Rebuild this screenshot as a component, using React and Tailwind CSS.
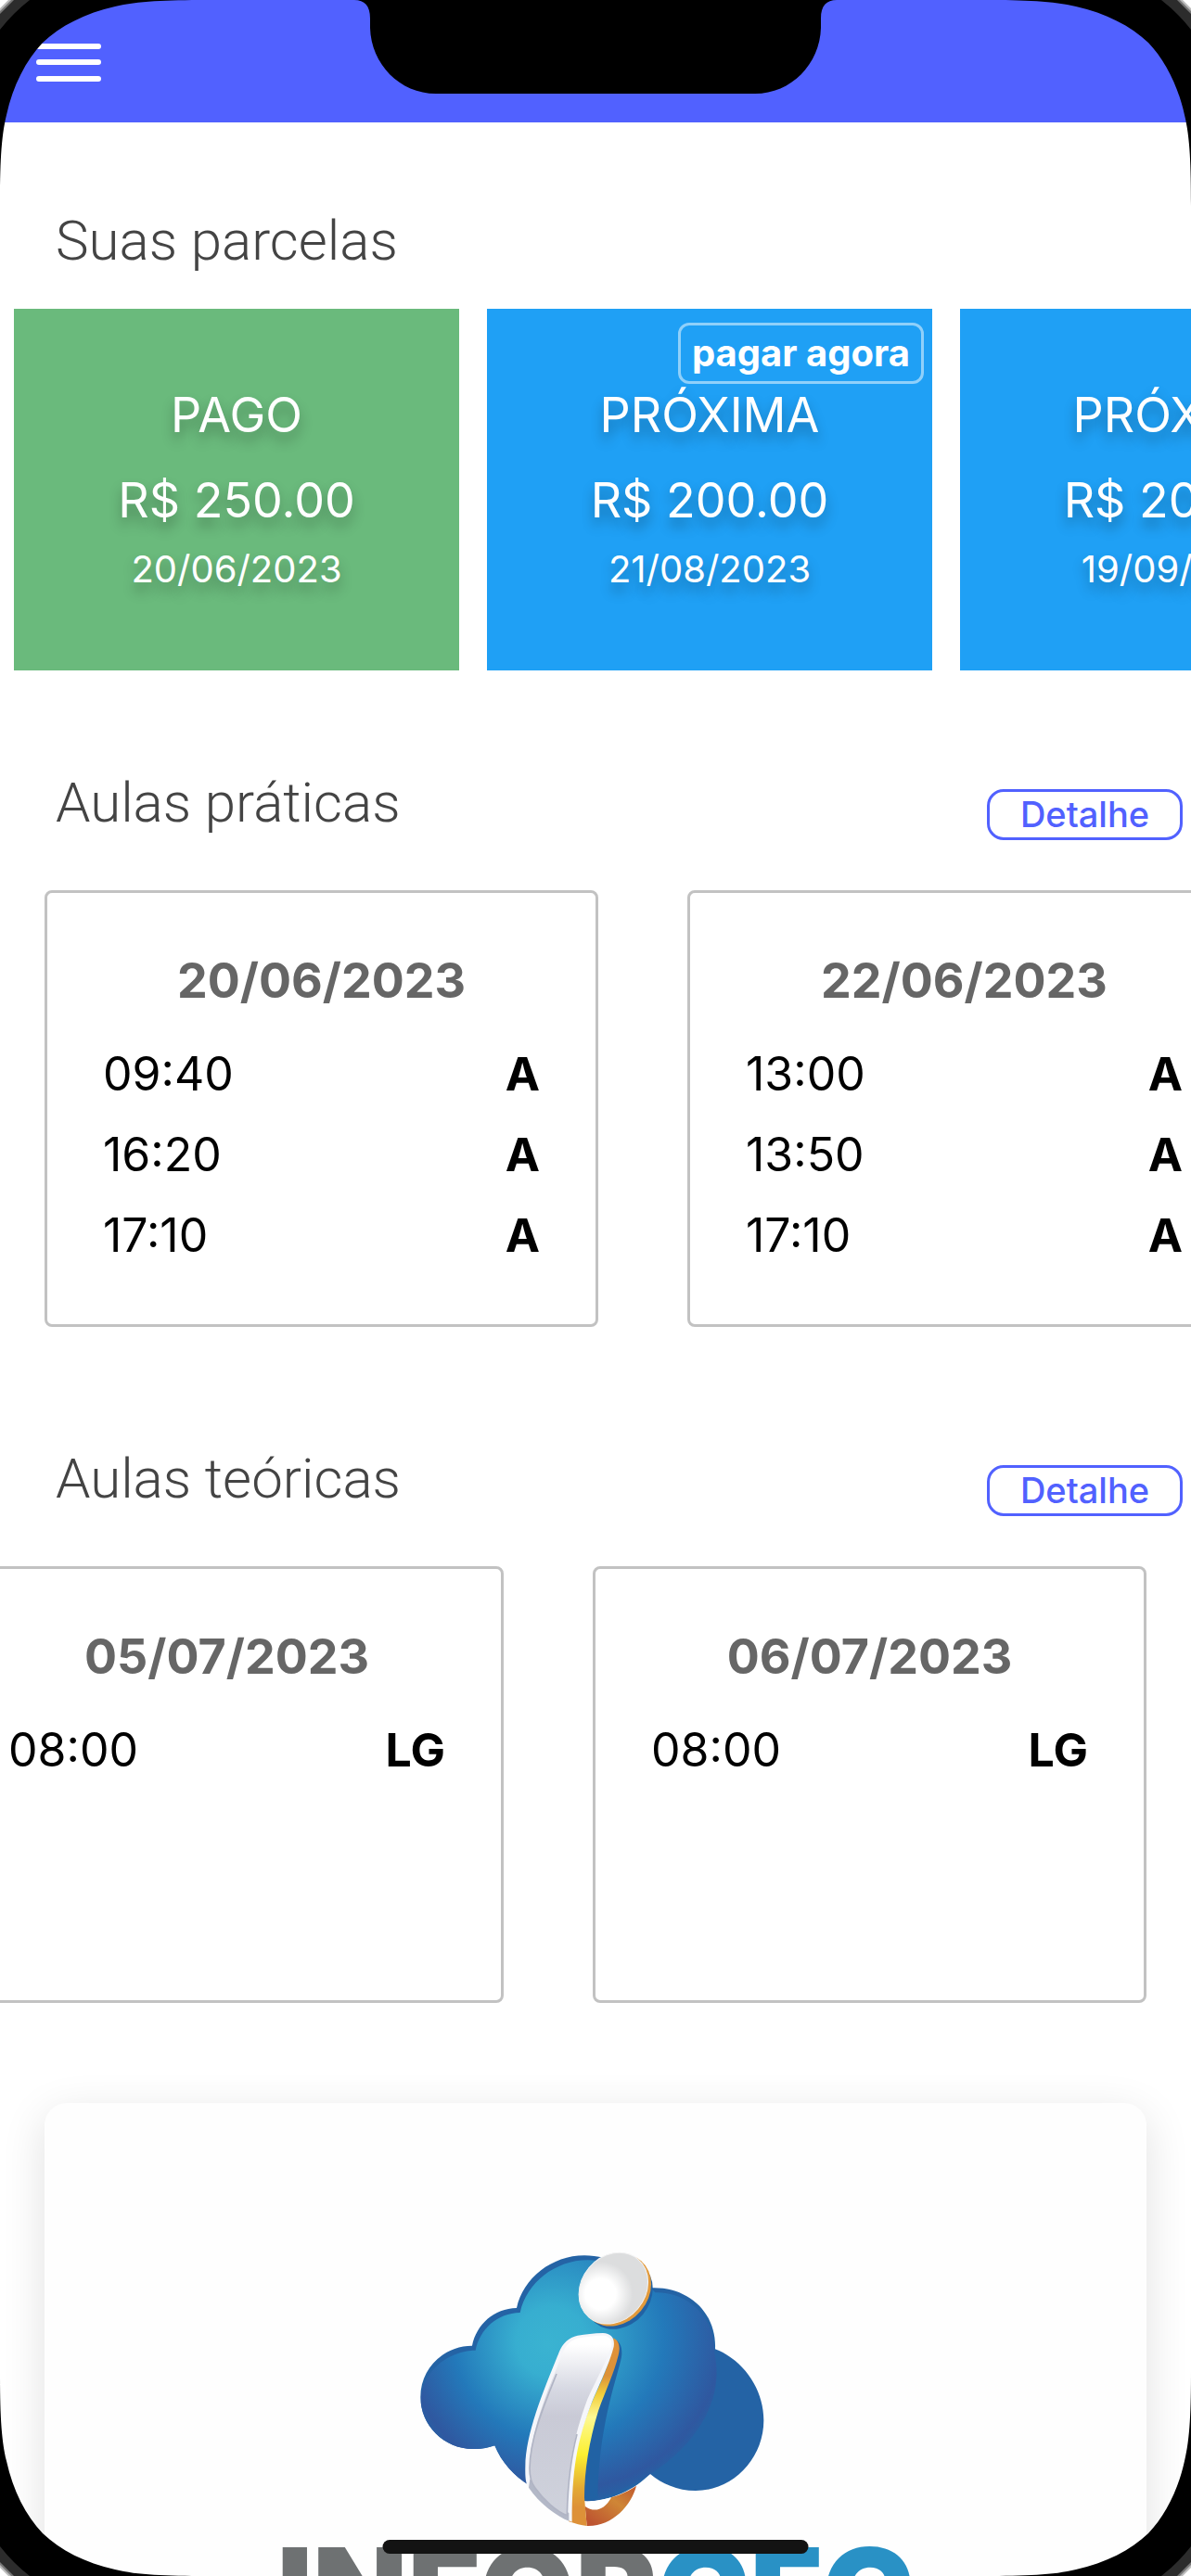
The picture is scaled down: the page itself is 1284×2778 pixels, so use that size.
// src/App.jsx
const parcelas = [
  { id: 1, status: "PAGO", valor: "R$ 250.00", data: "20/06/2023", pago: true },
  { id: 2, status: "PRÓXIMA", valor: "R$ 200.00", data: "21/08/2023", pagarAgora: true },
  { id: 3, status: "PRÓXIMA", valor: "R$ 200.00", data: "19/09/2023" },
];

const praticas = [
  {
    data: "20/06/2023",
    horarios: [
      { hora: "09:40", tipo: "A" },
      { hora: "16:20", tipo: "A" },
      { hora: "17:10", tipo: "A" },
    ],
  },
  {
    data: "22/06/2023",
    horarios: [
      { hora: "13:00", tipo: "A" },
      { hora: "13:50", tipo: "A" },
      { hora: "17:10", tipo: "A" },
    ],
  },
];

const teoricas = [
  { data: "05/07/2023", horarios: [{ hora: "08:00", tipo: "LG" }] },
  { data: "06/07/2023", horarios: [{ hora: "08:00", tipo: "LG" }] },
];

function Titulo({ children }) {
  return (
    <h2 className="font-['Roboto',sans-serif] text-[60px] leading-[81px] font-light text-[#444444]">
      {children}
    </h2>
  );
}

function ParcelaCard({ p }) {
  return (
    <li
      className={`relative flex h-[390px] w-[480px] shrink-0 flex-col items-center justify-center text-white ${
        p.pago ? "bg-[#6aba7c]" : "bg-[#1fa0f5]"
      }`}
    >
      {p.pagarAgora && (
        <button className="absolute top-[15px] right-[9px] rounded-xl border-3 border-white/50 px-3 text-[40px] leading-[60px] font-bold">
          pagar agora
        </button>
      )}
      <p className="mb-7 text-[52px] leading-[64px] [text-shadow:0_9px_14px_rgba(0,0,0,0.3)]">
        {p.status}
      </p>
      <p className="mb-4 text-[52px] leading-[64px] [text-shadow:0_9px_14px_rgba(0,0,0,0.3)]">
        {p.valor}
      </p>
      <p className="text-[40px] leading-[52px] [text-shadow:0_9px_14px_rgba(0,0,0,0.3)]">
        {p.data}
      </p>
    </li>
  );
}

function AulaCard({ aula }) {
  return (
    <li className="h-[471px] w-[597px] shrink-0 rounded-lg border-3 border-[#c2c2c2] px-[60px] pt-[62px]">
      <h3 className="mb-6 text-center text-[52px] leading-[66px] font-bold text-[#666666]">
        {aula.data}
      </h3>
      {aula.horarios.map((h) => (
        <div key={h.hora} className="flex justify-between text-[50px] leading-[87px] text-black">
          <span>{h.hora}</span>
          <strong>{h.tipo}</strong>
        </div>
      ))}
    </li>
  );
}

function AulasSection({ titulo, aulas, fim }) {
  return (
    <section className="pb-[21px]">
      <div className="mt-[102px] mb-[54px] flex items-end justify-between pr-[9px] pl-[60px]">
        <Titulo>{titulo}</Titulo>
        <button className="w-[211px] rounded-[18px] border-3 border-[#5161ff] text-[38px] leading-[49px] font-medium text-[#5161ff]">
          Detalhe
        </button>
      </div>
      <ul className={`flex gap-24 overflow-hidden px-12 ${fim ? "justify-end" : ""}`}>
        {aulas.map((a) => (
          <AulaCard key={a.data} aula={a} />
        ))}
      </ul>
    </section>
  );
}

function CloudLogo() {
  return (
    <svg viewBox="6 0 1440 1041" className="w-[480px]" role="img" aria-label="Inforcfc">
      <defs>
        <radialGradient id="sky" gradientUnits="userSpaceOnUse" cx="620" cy="380" r="570" fx="560" fy="430">
          <stop offset="0" stopColor="#3ab3d1" />
          <stop offset="0.2" stopColor="#37aed0" />
          <stop offset="0.6" stopColor="#2379ba" />
          <stop offset="0.9" stopColor="#2f58a0" />
          <stop offset="1" stopColor="#2463a5" />
        </radialGradient>
        <radialGradient id="dot" gradientUnits="userSpaceOnUse" cx="-41" cy="-20" r="110">
          <stop offset="0.45" stopColor="#ffffff" />
          <stop offset="0.95" stopColor="#dcddde" />
        </radialGradient>
        <linearGradient id="stem" x1="0" y1="0" x2="0" y2="1">
          <stop offset="0.05" stopColor="#ffffff" />
          <stop offset="0.3" stopColor="#d6d8e2" />
          <stop offset="0.45" stopColor="#c9cad6" />
          <stop offset="1" stopColor="#cfd2dc" />
        </linearGradient>
        <linearGradient id="gold" gradientUnits="userSpaceOnUse" x1="0" y1="425" x2="0" y2="1032">
          <stop offset="0" stopColor="#e0913a" />
          <stop offset="0.2" stopColor="#dc9238" />
          <stop offset="0.3" stopColor="#f2cf3c" />
          <stop offset="0.42" stopColor="#fdf894" />
          <stop offset="0.62" stopColor="#fbf030" />
          <stop offset="0.8" stopColor="#e3a934" />
          <stop offset="0.9" stopColor="#dd9138" />
        </linearGradient>
        <linearGradient id="tail" x1="0" y1="1" x2="1" y2="0">
          <stop offset="0.1" stopColor="#bd5430" />
          <stop offset="0.6" stopColor="#cf8636" />
          <stop offset="1" stopColor="#c0582e" />
        </linearGradient>
        <path
          id="cloud"
          d="M400 772C378 780 355 784 330 783C235 783 160 706 160 615C160 520 238 449 327 449C341 380 398 328 471 327C492 230 585 157 690 157C775 157 855 200 908 262C1025 258 1118 340 1113 460C1205 495 1270 590 1270 690C1270 815 1170 918 1050 918C990 918 940 895 903 864C850 915 780 950 700 952C560 950 444 880 400 772Z"
        />
        <clipPath id="cloudClip">
          <use href="#cloud" />
        </clipPath>
      </defs>
      <use href="#cloud" fill="#2463a5" />
      <g clipPath="url(#cloudClip)">
        <path
          transform="translate(11 15)"
          fill="url(#sky)"
          d="M380 790C235 783 150 706 150 615C150 520 238 449 327 449C341 380 398 328 471 327C492 230 585 157 690 157C775 157 855 200 908 262C1010 258 1102 340 1100 460C1140 640 1000 840 700 940C560 950 444 880 380 790Z"
        />
      </g>
      <path d="M692 955C715 955 750 948 775 940C752 985 712 985 692 968Z" fill="#ffffff" />
      <path d="M692 968C720 988 752 985 778 939C810 930 835 918 858 902C842 965 780 1035 698 1032Z" fill="url(#tail)" />
      <ellipse transform="translate(802 283) rotate(-50)" rx="120" ry="101" fill="#2162a4" />
      <ellipse transform="translate(794 270) rotate(-50)" rx="124" ry="103" fill="#e29a3c" />
      <ellipse transform="translate(784 263) rotate(-50)" rx="123" ry="103" fill="url(#dot)" stroke="#f3f3f3" strokeWidth="3" />
      <path d="M795 432C812 445 814 470 808 495C790 570 735 720 733 945L690 951C690 800 740 600 795 432Z" fill="#2162a4" />
      <path
        d="M784 424C800 432 806 448 802 470C790 530 760 590 735 660C705 760 690 850 690 940L698 1032C680 1030 660 1025 640 1018C643 880 660 770 705 655C740 570 780 500 784 424Z"
        fill="url(#gold)"
      />
      <path
        d="M668 416C640 422 620 440 608 470C560 590 500 730 499 840C498 880 501 895 510 908C545 960 600 1000 650 1019C650 850 665 760 715 630C740 570 772 505 785 452C789 425 778 410 750 408C720 409 695 412 668 416Z"
        fill="#f5f6fa"
      />
      <path d="M510 908C545 960 600 1000 640 1016L640 990C590 970 540 930 514 880Z" fill="#b3b8c7" />
      <path
        d="M672 424C646 430 630 446 618 476C572 594 514 730 513 845C513 880 520 895 530 908C560 950 600 985 634 998C636 850 652 752 700 622C728 560 764 495 777 452C781 430 772 418 750 416C720 417 697 420 672 424Z"
        fill="url(#stem)"
      />
      <path d="M600 540C560 640 514 750 513 845C513 880 520 895 530 908C560 950 600 985 634 998C636 900 644 820 666 735" fill="none" stroke="#b0b4c4" strokeWidth="5" />
    </svg>
  );
}

// one rounded corner of the handset, mirrored for the other three
function Corner({ className }) {
  return (
    <svg viewBox="0 0 222 222" className={`absolute size-[222px] ${className}`} aria-hidden="true">
      <path d="M0 0H222C180 0 148 1 124 7C92 14 65 28 46 46C28 65 14 92 7 124C1 148 0 180 0 222Z" fill="#000000" />
      <path d="M0 0H32Q14 14 0 32Z" fill="#2c2c2c" />
      <path d="M0 0H15L0 15Z" fill="#777777" />
      <path d="M0 0H12L0 12Z" fill="#bbbbbb" />
      <path d="M0 0H9L0 9Z" fill="#ffffff" />
    </svg>
  );
}

function Handset() {
  return (
    <div className="pointer-events-none absolute inset-0">
      <Corner className="top-0 left-0" />
      <Corner className="top-0 right-0 -scale-x-100" />
      <Corner className="bottom-0 left-0 -scale-y-100" />
      <Corner className="right-0 bottom-0 -scale-100" />
      <svg viewBox="0 0 520 101" className="absolute top-0 left-1/2 w-[520px] -translate-x-1/2" aria-hidden="true">
        <path
          d="M0 0C11 0 17 6 17 20V30C18 69 49 101 88 101H432C471 101 502 69 503 30V20C503 6 509 0 520 0Z"
          fill="#000000"
        />
      </svg>
      <div className="absolute bottom-6 left-1/2 h-[15px] w-[459px] -translate-x-1/2 rounded-full bg-[#131313]" />
    </div>
  );
}

export default function App() {
  return (
    <div className="relative h-screen overflow-hidden bg-white font-['Inter',sans-serif]">
      <header className="flex h-[132px] items-start bg-[#5161ff] px-[38px] pt-[46px]">
        <button aria-label="Menu">
          <svg viewBox="0 0 72 42" className="w-[72px]" stroke="#ffffff" strokeWidth="6" strokeLinecap="round">
            <path d="M4 4H68M4 21H68M4 39H68" />
          </svg>
        </button>
      </header>

      <main>
        <section>
          <div className="mt-[87px] mb-[33px] pl-[60px]">
            <Titulo>Suas parcelas</Titulo>
          </div>
          <ul className="flex gap-[30px] overflow-hidden pl-[15px]">
            {parcelas.map((p) => (
              <ParcelaCard key={p.id} p={p} />
            ))}
          </ul>
        </section>

        <AulasSection titulo="Aulas práticas" aulas={praticas} />
        <AulasSection titulo="Aulas teóricas" aulas={teoricas} fim />

        <section className="mx-12 mt-[87px] flex flex-col items-center rounded-3xl bg-[#fefefe] pt-28 pb-12 shadow-[0_12px_48px_rgba(0,0,0,0.12)]">
          <CloudLogo />
          <p className="mt-1 text-[133px] leading-[130px] font-black text-[#6e7172]">
            INFOR<span className="text-[#2991c5]">CFC</span>
          </p>
        </section>
      </main>

      <Handset />
    </div>
  );
}
